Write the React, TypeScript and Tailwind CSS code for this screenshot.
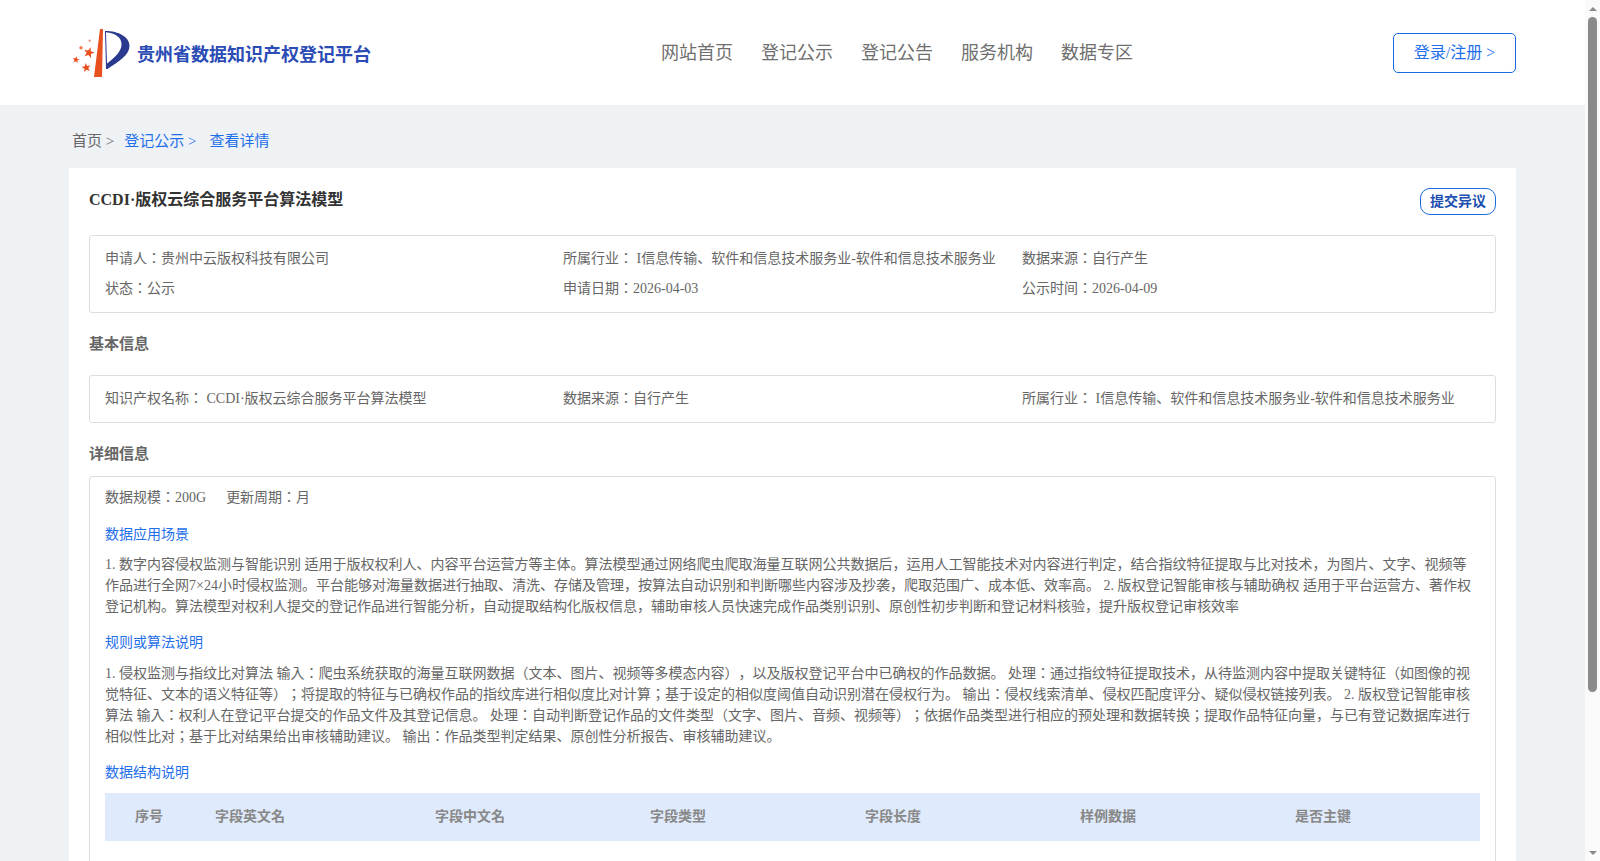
import React from "react";

const body = "text-[14px] text-[#666]";

function star(cx: number, cy: number, r: number, rotate = 0) {
  const pts: string[] = [];
  for (let i = 0; i < 10; i++) {
    const rad = i % 2 === 0 ? r : r * 0.42;
    const a = ((-90 + rotate + i * 36) * Math.PI) / 180;
    pts.push(`${(cx + rad * Math.cos(a)).toFixed(2)},${(cy + rad * Math.sin(a)).toFixed(2)}`);
  }
  return pts.join(" ");
}

function Logo() {
  return (
    <svg width="60" height="55" viewBox="0 0 60 55" className="shrink-0">
      <path d="M24 52 L30 4 L33 4 L32 52 Z" fill="#e8501f" />
      <path d="M35 6 C49 6 59.5 12 59.5 21 C59.5 30 48 37 37.5 44 L36 44 Z M36 7.2 L37 38.5 C44 33 51.5 27 51.5 19.5 C51.5 12 45 8 36 7.2 Z" fill="#2b3a8f" fillRule="evenodd" />
      <polygon points={star(19, 27.7, 5.6, 15)} fill="#e8501f" />
      <polygon points={star(6, 34.7, 3.6, 10)} fill="#e8501f" />
      <polygon points={star(16.3, 42.7, 4.8, -10)} fill="#e8501f" />
      <circle cx="11" cy="22.7" r="1.7" fill="#ee7a50" />
      <circle cx="19.7" cy="15.7" r="1.1" fill="#ee8a63" />
    </svg>
  );
}

function Bordered({ children, className = "" }: { children: React.ReactNode; className?: string }) {
  return <div className={`border border-[#ddd] rounded-[3px] px-[15px] ${className}`}>{children}</div>;
}

function Scrollbar() {
  return (
    <aside className="w-[15px] shrink-0 bg-[#fafafa] flex flex-col items-center">
      <div className="h-[17px] flex items-center">
        <div className="w-0 h-0 border-x-[4px] border-x-transparent border-b-[4px] border-b-[#8a8a8a]" />
      </div>
      <div className="w-[9px] h-[675px] rounded-full bg-[#8a8a8a]" />
      <div className="flex-1" />
      <div className="h-[17px] flex items-center">
        <div className="w-0 h-0 border-x-[4px] border-x-transparent border-t-[4px] border-t-[#8a8a8a]" />
      </div>
    </aside>
  );
}

export default function App() {
  return (
    <div className="h-screen overflow-hidden flex font-['Liberation_Serif','Noto_Sans_CJK_JP',serif] [text-spacing-trim:space-all]">
      <div className="flex-1 min-w-0 bg-[#eff2f5]">
        <header className="h-[105px] bg-white pr-[69px] flex items-center">
          <div className="flex items-center w-[661px] pl-[70px]">
            <Logo />
            <span className="text-[18px] font-bold text-[#2b4bb5] mt-[5px] ml-[7px]">贵州省数据知识产权登记平台</span>
          </div>
          <nav className="flex gap-[28px] text-[18px] text-[#6f6f6f] mt-[1px]">
            <a>网站首页</a>
            <a>登记公示</a>
            <a>登记公告</a>
            <a>服务机构</a>
            <a>数据专区</a>
          </nav>
          <button className="ml-auto w-[123px] h-[40px] pt-[1px] border border-[#1a6ae0] rounded-[5px] text-[16px] text-[#1f6feb]">登录/注册 &gt;</button>
        </header>

        <div className="h-[63px] pl-[72px] pt-[10px] flex items-center gap-[10px] text-[15px] text-[#1f6feb]">
          <span className="text-[#666]">首页 &gt;</span>
          <span className="mr-[3px]">登记公示 &gt;</span>
          <span>查看详情</span>
        </div>

        <main className="mx-[69px] bg-white px-[20px] pt-[20px] min-h-[887px]">
          <div className="flex justify-between items-start h-[47px]">
            <h1 className="text-[16px] font-bold text-[#333]">CCDI·版权云综合服务平台算法模型</h1>
            <button className="w-[76px] h-[27px] border border-[#1a6ae0] rounded-[10px] text-[14px] font-bold text-[#1d4fb0]">提交异议</button>
          </div>

          <Bordered className={`${body} h-[78px] pb-[2px] grid grid-cols-[458px_459px_1fr] content-center gap-y-[9px] leading-[21px]`}>
            <div>申请人：贵州中云版权科技有限公司</div>
            <div>所属行业： I信息传输、软件和信息技术服务业-软件和信息技术服务业</div>
            <div>数据来源：自行产生</div>
            <div>状态：公示</div>
            <div>申请日期：2026-04-03</div>
            <div>公示时间：2026-04-09</div>
          </Bordered>

          <h2 className="h-[62px] flex items-center text-[15px] font-bold text-[#666]">基本信息</h2>

          <Bordered className={`${body} h-[48px] pb-[2px] grid grid-cols-[458px_459px_1fr] items-center`}>
            <div>知识产权名称： CCDI·版权云综合服务平台算法模型</div>
            <div>数据来源：自行产生</div>
            <div>所属行业： I信息传输、软件和信息技术服务业-软件和信息技术服务业</div>
          </Bordered>

          <h2 className="h-[53px] pt-[9px] flex items-center text-[15px] font-bold text-[#666]">详细信息</h2>

          <Bordered className={`${body} pt-[10px] pb-[30px]`}>
            <div className="flex gap-[20px] leading-[21px]">
              <span>数据规模：200G</span>
              <span>更新周期：月</span>
            </div>
            <h3 className="mt-[16px] text-[#1f6feb] leading-[21px]">数据应用场景</h3>
            <p className="mt-[9px] leading-[21px]">
              1. 数字内容侵权监测与智能识别 适用于版权权利人、内容平台运营方等主体。算法模型通过网络爬虫爬取海量互联网公共数据后，运用人工智能技术对内容进行判定，结合指纹特征提取与比对技术，为图片、文字、视频等作品进行全网7×24小时侵权监测。平台能够对海量数据进行抽取、清洗、存储及管理，按算法自动识别和判断哪些内容涉及抄袭，爬取范围广、成本低、效率高。 2. 版权登记智能审核与辅助确权 适用于平台运营方、著作权登记机构。算法模型对权利人提交的登记作品进行智能分析，自动提取结构化版权信息，辅助审核人员快速完成作品类别识别、原创性初步判断和登记材料核验，提升版权登记审核效率
            </p>
            <h3 className="mt-[15px] text-[#1f6feb] leading-[21px]">规则或算法说明</h3>
            <p className="mt-[10px] leading-[21px]">
              1. 侵权监测与指纹比对算法 输入：爬虫系统获取的海量互联网数据（文本、图片、视频等多模态内容），以及版权登记平台中已确权的作品数据。 处理：通过指纹特征提取技术，从待监测内容中提取关键特征（如图像的视觉特征、文本的语义特征等）；将提取的特征与已确权作品的指纹库进行相似度比对计算；基于设定的相似度阈值自动识别潜在侵权行为。 输出：侵权线索清单、侵权匹配度评分、疑似侵权链接列表。 2. 版权登记智能审核算法 输入：权利人在登记平台提交的作品文件及其登记信息。 处理：自动判断登记作品的文件类型（文字、图片、音频、视频等）；依据作品类型进行相应的预处理和数据转换；提取作品特征向量，与已有登记数据库进行相似性比对；基于比对结果给出审核辅助建议。 输出：作品类型判定结果、原创性分析报告、审核辅助建议。
            </p>
            <h3 className="mt-[15px] text-[#1f6feb] leading-[21px]">数据结构说明</h3>
            <div className="mt-[10px] h-[48px] pb-[1px] bg-[#dfebfc] grid grid-cols-[110px_220px_215px_215px_215px_215px_1fr] items-center font-bold text-[#888]">
              <div className="pl-[30px]">序号</div>
              <div>字段英文名</div>
              <div>字段中文名</div>
              <div>字段类型</div>
              <div>字段长度</div>
              <div>样例数据</div>
              <div>是否主键</div>
            </div>
          </Bordered>
        </main>
      </div>
      <Scrollbar />
    </div>
  );
}
